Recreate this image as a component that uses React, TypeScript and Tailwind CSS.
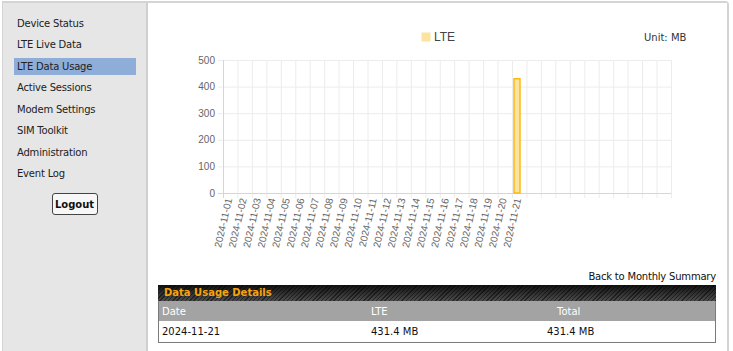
import React from "react";

const menu = [
  "Device Status",
  "LTE Live Data",
  "LTE Data Usage",
  "Active Sessions",
  "Modem Settings",
  "SIM Toolkit",
  "Administration",
  "Event Log",
];

const X0 = 224;
const STEP = 14.45;
const Y0 = 193;
const SCALE = 133 / 500;

const UsageChart: React.FC = () => {
  const cats = Array.from({ length: 31 }, (_, i) => i);
  const labels = Array.from({ length: 21 }, (_, i) => `2024-11-${String(i + 1).padStart(2, "0")}`);
  const yTicks = [0, 100, 200, 300, 400, 500];
  const barTop = Y0 - 431.4 * SCALE;

  return (
    <svg width="578" height="266" className="block">
      <g transform="translate(-149,-3)" fontFamily="'Liberation Sans', Arial, sans-serif">
        {/* legend */}
        <rect x="422.5" y="32.5" width="9" height="9" fill="#fde3a0" />
        <text x="435" y="41" fontSize="12" fill="#444">LTE</text>
        <text x="645" y="41" fontSize="10" fill="#333" fontFamily="'DejaVu Sans', Verdana, sans-serif">
          Unit: MB
        </text>

        {/* vertical grid */}
        {cats.map((i) => (
          <line key={i} x1={X0 + i * STEP + 0.5} x2={X0 + i * STEP + 0.5} y1="60" y2="198" stroke="#ececec" />
        ))}
        <line x1="672.5" x2="672.5" y1="60" y2="198" stroke="#ececec" />

        {/* horizontal grid + y labels */}
        {yTicks.map((v) => {
          const y = Y0 - v * SCALE;
          return (
            <g key={v}>
              <line x1="219" x2="672" y1={y + 0.5} y2={y + 0.5} stroke={v === 0 ? "#d6d6d6" : "#ececec"} />
              <text x="216" y={y + 3.5} fontSize="10" fill="#666" textAnchor="end">
                {v}
              </text>
            </g>
          );
        })}
        <line x1={X0 + 0.5} x2={X0 + 0.5} y1="60" y2="198" stroke="#d6d6d6" />

        {/* bar */}
        <rect x="515" y={barTop + 0.5} width="6" height={Y0 - barTop - 0.5} fill="#fde3a0" stroke="#fbb917" strokeWidth="1.5" />

        {/* x labels */}
        {labels.map((l, i) => {
          const cx = X0 + i * STEP + STEP / 2 + 2;
          return (
            <text
              key={l}
              x={cx}
              y="199"
              fontSize="10"
              fill="#666"
              textAnchor="end"
              transform={`rotate(-77 ${cx} 199)`}
            >
              {l}
            </text>
          );
        })}
      </g>
    </svg>
  );
};

const App: React.FC = () => {
  return (
    <div className="w-[733px] h-[351px] bg-white overflow-hidden pt-[1px] pl-[2px] font-['DejaVu_Sans',Verdana,sans-serif] text-[10px] text-[#222]">
      <div className="flex w-[727px] h-[360px] border-t-2 border-r-2 border-l border-[#d4d4d4] rounded-tr-[4px]">
        {/* Sidebar */}
        <aside className="w-[145px] shrink-0 bg-[#e6e6e6] border-r-2 border-[#cfcfcf] pt-[11.5px]">
          <ul className="ml-[11px] w-[122px]">
            {menu.map((m) => (
              <li
                key={m}
                className={`h-[17px] leading-[17px] pl-[3px] mb-[4.5px] tracking-[-0.2px] ${m === "LTE Data Usage" ? "bg-[#8fadd9]" : ""}`}
              >
                {m}
              </li>
            ))}
          </ul>
          <div className="flex justify-center mt-[11px]">
            <button className="w-[46px] h-[22px] border border-[#444] rounded-[3px] bg-[#f7f7f7] font-bold text-[10px] text-[#111]">
              Logout
            </button>
          </div>
        </aside>

        {/* Main */}
        <main className="flex-1 bg-white">
          <UsageChart />
          <div className="mt-[2px] h-[12px] leading-[12px] text-right pr-[11px] text-[#111] tracking-[-0.2px]">
            Back to Monthly Summary
          </div>
          <div className="ml-[10px] mr-[11px] mt-[2px]">
            <div className="h-[16px] leading-[16px] pl-[6px] font-bold text-[#f5a40c] bg-[linear-gradient(to_bottom,rgba(0,0,0,0.8),rgba(0,0,0,0.1)),repeating-linear-gradient(135deg,#2c2c2c_0px,#2c2c2c_1px,#555_1px,#555_3px)]">
              Data Usage Details
            </div>
            <div className="border-l border-r border-b border-[#7a7a7a]">
              <div className="grid grid-cols-[209px_178px_1fr] h-[20px] items-center bg-[#a3a3a3] text-white">
                <div className="pl-[3px]">Date</div>
                <div className="pl-[3px]">LTE</div>
                <div className="pl-[11px]">Total</div>
              </div>
              <div className="grid grid-cols-[209px_178px_1fr] h-[21px] items-center bg-white text-[#111]">
                <div className="pl-[3px]">2024-11-21</div>
                <div className="pl-[3px]">431.4 MB</div>
                <div className="pl-[1px]">431.4 MB</div>
              </div>
            </div>
          </div>
        </main>
      </div>
    </div>
  );
};

export default App;
